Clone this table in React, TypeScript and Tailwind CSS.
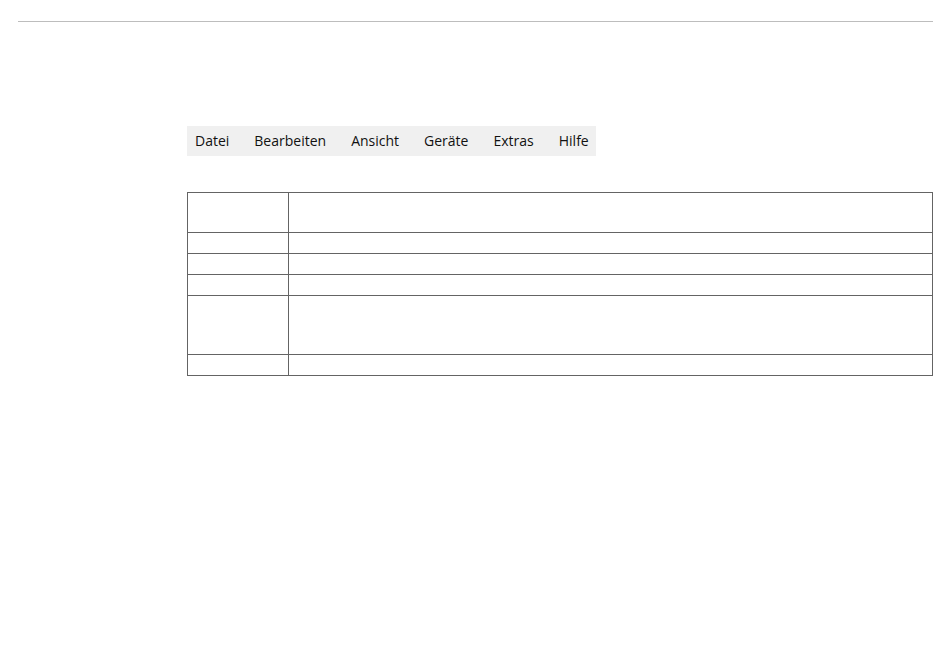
const menu = ["Datei", "Bearbeiten", "Ansicht", "Geräte", "Extras", "Hilfe"];

const rows = [
  "h-[39px]",
  "h-[21px]",
  "h-[21px]",
  "h-[21px]",
  "h-[59px]",
  "h-[21px]",
];

export default function App() {
  return (
    <div className="min-h-[652px] w-[950px] bg-white font-['Open_Sans',sans-serif] text-black">
      <div className="pt-[21px] pl-[18px]">
        <div className="h-px w-[915px] bg-[#bdbdbd]" />
      </div>

      <div className="pl-[187px] pt-[104px]">
        <nav className="flex h-[30px] w-[409px] items-center gap-[25px] bg-[#f0f0f0] px-2 pb-px text-[14px] text-[#111]">
          {menu.map((item) => (
            <span key={item}>{item}</span>
          ))}
        </nav>

        <div className="mt-[36px] w-[746px] border border-[#646464]">
          {rows.map((h, i) => (
            <div
              key={i}
              className={`flex ${h} ${i > 0 ? "border-t border-[#646464]" : ""}`}
            >
              <div className="w-[101px] border-r border-[#646464]" />
              <div className="flex-1" />
            </div>
          ))}
        </div>
      </div>
    </div>
  );
}
